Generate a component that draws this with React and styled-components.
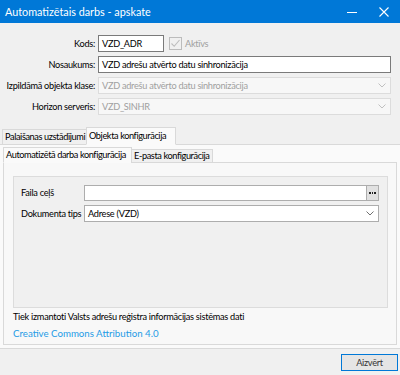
import React from "react";
import styled, { createGlobalStyle } from "styled-components";

const Global = createGlobalStyle`
  html, body { margin: 0; padding: 0; background: #f0f0f0; }
  body { font-family: Lato, "Noto Sans", sans-serif; font-size: 9.2px; letter-spacing: -0.28px; color: #000; }
  * { box-sizing: border-box; }
`;

const Window = styled.div`
  width: 400px;
  height: 375px;
  display: flex;
  flex-direction: column;
  background: #f0f0f0;
  overflow: hidden;
`;

const TitleBar = styled.div`
  height: 23px;
  flex: none;
  background: #0078d7;
  color: #fff;
  display: flex;
  align-items: center;
  padding-left: 5px;
  font-size: 10.8px;
  letter-spacing: 0;
`;

const TitleText = styled.div`
  flex: 1;
`;

const TitleButton = styled.div`
  width: 32px;
  height: 23px;
  display: flex;
  align-items: center;
  justify-content: center;
`;

const Form = styled.div`
  display: grid;
  grid-template-columns: 95px 293px;
  column-gap: 3px;
  row-gap: 4px;
  padding: 12px 0 0 0;
  align-items: center;
`;

const Label = styled.div`
  text-align: right;
  white-space: nowrap;
  line-height: 17px;
  height: 17px;
`;

const TextBox = styled.div`
  height: 17px;
  border: 1px solid ${(p) => (p.$disabled ? "#dcdcdc" : "#7a7a7a")};
  background: ${(p) => (p.$disabled ? "#f7f7f7" : "#fff")};
  color: ${(p) => (p.$disabled ? "#a0a0a0" : "#000")};
  width: ${(p) => p.$width || "100%"};
  display: flex;
  align-items: center;
  padding-left: 3px;
  line-height: 15px;
  white-space: nowrap;
  overflow: hidden;
`;

const BoxText = styled.div`
  flex: 1;
`;

const KodsRow = styled.div`
  display: flex;
  align-items: center;
  gap: 5px;
`;

const CheckBox = styled.div`
  width: 13px;
  height: 13px;
  border: 1px solid #bcbcbc;
  background: #f0f0f0;
  display: flex;
  align-items: center;
  justify-content: center;
`;

const CheckLabel = styled.span`
  color: #a0a0a0;
  margin-left: -2px;
`;

const Chevron = styled.div`
  width: 16px;
  display: flex;
  align-items: center;
  justify-content: center;
`;

const TabsOuter = styled.div`
  margin-top: 11px;
  flex: 1;
  display: flex;
  flex-direction: column;
`;

const TabStrip = styled.div`
  display: flex;
  align-items: flex-end;
  padding-left: ${(p) => p.$pad || 2}px;
  height: ${(p) => p.$h || 18}px;
  position: relative;
  z-index: 1;
`;

const Tab = styled.div`
  flex: none;
  height: ${(p) => p.$th}px;
  width: ${(p) => p.$w}px;
  padding: 0 2px;
  margin-left: ${(p) => (p.$active ? "-1px" : "0")};
  margin-right: ${(p) => (p.$active ? "-1px" : "0")};
  background: ${(p) => (p.$active ? "#fafafa" : "#f0f0f0")};
  border: 1px solid #d9d9d9;
  border-bottom: ${(p) => (p.$active ? "1px solid #fafafa" : "1px solid #d9d9d9")};
  margin-bottom: -1px;
  line-height: ${(p) => p.$th - 2}px;
  letter-spacing: -0.4px;
  white-space: nowrap;
`;

const OuterPanel = styled.div`
  flex: 1;
  border-top: 1px solid #d9d9d9;
  border-bottom: 1px solid #d9d9d9;
  background: #fafafa;
  padding: 1px 3px 3px 3px;
  display: flex;
  flex-direction: column;
`;

const InnerPanel = styled.div`
  flex: 1;
  border: 1px solid #d9d9d9;
  background: #f8f8f8;
  padding: 13px 8px 0 9px;
  display: flex;
  flex-direction: column;
`;

const GroupBox = styled.div`
  height: 132px;
  border: 1px solid #dcdcdc;
  background: #f0f0f0;
  padding: 8px 8px 0 7px;
  display: grid;
  grid-template-columns: 63px 295px;
  row-gap: 4px;
  align-content: start;
  align-items: center;
`;

const GLabel = styled.div`
  white-space: nowrap;
  line-height: 16px;
`;

const Field = styled.div`
  height: ${(p) => p.$h || 16}px;
  border: 1px solid #adadad;
  background: #fff;
  display: flex;
  align-items: stretch;
  padding-left: 3px;
  line-height: 14px;
`;

const FieldText = styled.div`
  flex: 1;
  display: flex;
  align-items: center;
`;

const DotsButton = styled.div`
  width: 12px;
  background: #e1e1e1;
  border-left: 1px solid #adadad;
  display: flex;
  align-items: center;
  justify-content: center;
  gap: 1px;
`;

const Dot = styled.span`
  width: 1.5px;
  height: 1.5px;
  background: #222;
`;

const InfoText = styled.div`
  margin-top: 1px;
  line-height: 16px;
`;

const Link = styled.a`
  color: #1e9be6;
  text-decoration: none;
  line-height: 16px;
  font-size: 9.7px;
  letter-spacing: 0;
`;

const Footer = styled.div`
  height: 26px;
  flex: none;
  display: flex;
  align-items: center;
  justify-content: flex-end;
  padding-right: 2px;
`;

const Button = styled.div`
  width: 57px;
  height: 17px;
  border: 1px solid #0078d7;
  background: #e5e5e5;
  display: flex;
  align-items: center;
  justify-content: center;
  line-height: 15px;
  color: #333;
`;

const ChevronIcon = ({ color = "#a0a0a0" }) => (
  <svg width="8" height="5" viewBox="0 0 8 5">
    <path d="M0.5 0.5 L4 4 L7.5 0.5" fill="none" stroke={color} strokeWidth="1" />
  </svg>
);

export default function App() {
  return (
    <>
      <Global />
      <Window>
        <TitleBar>
          <TitleText>Automatizētais darbs - apskate</TitleText>
          <TitleButton>
            <svg width="10" height="10" viewBox="0 0 10 10">
              <line x1="0" y1="5.5" x2="10" y2="5.5" stroke="#fff" strokeWidth="1" />
            </svg>
          </TitleButton>
          <TitleButton>
            <svg width="10" height="10" viewBox="0 0 10 10">
              <path d="M0.5 0.5 L9.5 9.5 M9.5 0.5 L0.5 9.5" stroke="#fff" strokeWidth="1.1" />
            </svg>
          </TitleButton>
        </TitleBar>

        <Form>
          <Label>Kods:</Label>
          <KodsRow>
            <TextBox $width="66px">VZD_ADR</TextBox>
            <CheckBox>
              <svg width="11" height="11" viewBox="0 0 11 11">
                <path d="M1.5 5.5 L4.2 8.3 L9.5 2" fill="none" stroke="#bcbcbc" strokeWidth="1.1" />
              </svg>
            </CheckBox>
            <CheckLabel>Aktīvs</CheckLabel>
          </KodsRow>

          <Label>Nosaukums:</Label>
          <TextBox>VZD adrešu atvērto datu sinhronizācija</TextBox>

          <Label>Izpildāmā objekta klase:</Label>
          <TextBox $disabled>
            <BoxText>VZD adrešu atvērto datu sinhronizācija</BoxText>
            <Chevron>
              <ChevronIcon color="#c0c0c0" />
            </Chevron>
          </TextBox>

          <Label>Horizon serveris:</Label>
          <TextBox $disabled>
            <BoxText>VZD_SINHR</BoxText>
            <Chevron>
              <ChevronIcon color="#c0c0c0" />
            </Chevron>
          </TextBox>
        </Form>

        <TabsOuter>
          <TabStrip $h={18}>
            <Tab $th={16} $w={85}>Palaišanas uzstādījumi</Tab>
            <Tab $active $th={18} $w={90}>Objekta konfigurācija</Tab>
          </TabStrip>
          <OuterPanel>
            <TabStrip $pad={1} $h={16}>
              <Tab $active $th={16} $w={129}>Automatizētā darba konfigurācija</Tab>
              <Tab $th={14} $w={82}>E-pasta konfigurācija</Tab>
            </TabStrip>
            <InnerPanel>
              <GroupBox>
                <GLabel>Faila ceļš</GLabel>
                <Field>
                  <FieldText />
                  <DotsButton>
                    <Dot />
                    <Dot />
                    <Dot />
                  </DotsButton>
                </Field>
                <GLabel>Dokumenta tips</GLabel>
                <Field $h={17}>
                  <FieldText>Adrese (VZD)</FieldText>
                  <Chevron>
                    <ChevronIcon color="#707070" />
                  </Chevron>
                </Field>
              </GroupBox>
              <InfoText>Tiek izmantoti Valsts adrešu reģistra informācijas sistēmas dati</InfoText>
              <Link href="#">Creative Commons Attribution 4.0</Link>
            </InnerPanel>
          </OuterPanel>
        </TabsOuter>

        <Footer>
          <Button>Aizvērt</Button>
        </Footer>
      </Window>
    </>
  );
}
